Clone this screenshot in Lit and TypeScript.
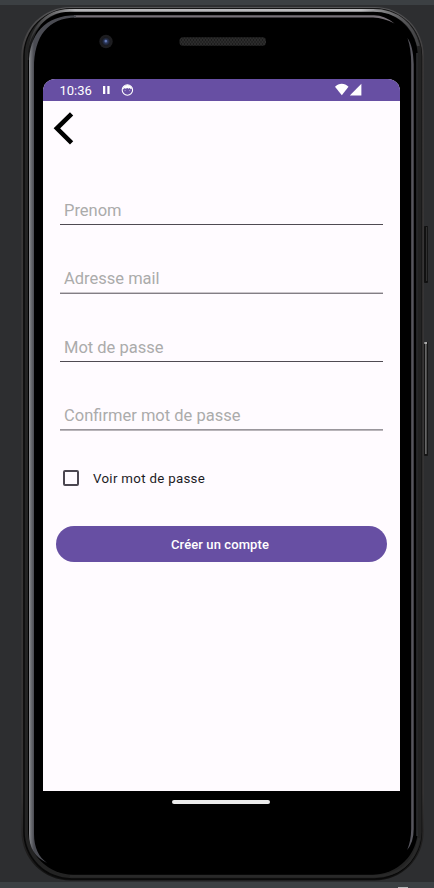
import { LitElement, html, css } from "lit";
import { customElement } from "lit/decorators.js";
import { classMap } from "lit/directives/class-map.js";

const FIELDS = [
  { label: "Prenom", rule: "crisp" },
  { label: "Adresse mail", rule: "low" },
  { label: "Mot de passe", rule: "crisp" },
  { label: "Confirmer mot de passe", rule: "high" },
];

@customElement("device-frame")
class DeviceFrame extends LitElement {
  static styles = css`
    :host { display: block; }
    svg { display: block; }
  `;
  render() {
    return html`<svg width="434" height="888" viewBox="0 0 434 888" aria-hidden="true">
      <defs>
        <linearGradient id="outer" gradientUnits="userSpaceOnUse" x1="0" y1="7" x2="0" y2="881">
          <stop offset="0" stop-color="#555557" /><stop offset="0.06" stop-color="#3c3a3a" />
          <stop offset="0.9" stop-color="#373535" /><stop offset="1" stop-color="#111" />
        </linearGradient>
        <linearGradient id="shine" gradientUnits="userSpaceOnUse" x1="28" y1="0" x2="420" y2="0">
          <stop offset="0" stop-color="#77777b" stop-opacity="0.15" /><stop offset="0.12" stop-color="#b4b4b7" />
          <stop offset="0.85" stop-color="#bcbcbf" /><stop offset="1" stop-color="#66666a" stop-opacity="0.4" />
        </linearGradient>
        <linearGradient id="left" gradientUnits="userSpaceOnUse" x1="29" y1="0" x2="34" y2="0">
          <stop offset="0" stop-color="#929397" /><stop offset="0.35" stop-color="#707277" />
          <stop offset="1" stop-color="#4a4b52" />
        </linearGradient>
        <radialGradient id="lens"><stop offset="0" stop-color="#53669b" /><stop offset="0.45" stop-color="#293454" /><stop offset="1" stop-color="#15161c" /></radialGradient>
        <pattern id="mesh" width="3" height="4" patternUnits="userSpaceOnUse">
          <rect width="3" height="4" fill="#1c1c1c" /><path d="M0 0l3 4M3 0l-3 4" stroke="#343434" stroke-width="0.7" />
        </pattern>
      </defs>
      <rect width="434" height="888" fill="#2d2e30" />
      <rect width="434" height="5" fill="#3c4043" />
      <rect y="882" width="434" height="6" fill="#3c4043" />
      <rect x="398" y="887" width="10" height="1" fill="#b5b7b8" />
      <rect x="424" y="226" width="4" height="57" rx="1" fill="#111" />
      <rect x="426" y="227" width="1.2" height="54" fill="#303030" />
      <rect x="424" y="342" width="4" height="114" rx="1" fill="#151515" />
      <rect x="425" y="343" width="1.7" height="111" fill="#656565" />
      <rect x="424.3" y="342" width="2.7" height="2" fill="#aaa" />
      <rect x="21.3" y="7" width="402.4" height="873.5" rx="49" fill="url(#outer)" />
      <rect x="23.2" y="8" width="399" height="871.7" rx="48" fill="#090909" />
      <rect x="24.7" y="8.5" width="397" height="869.7" rx="47" fill="#232323" />
      <rect x="28" y="11" width="389.7" height="863.7" rx="45" fill="#000" />
      <path d="M29 60C29 30 44 10.3 70 10.3H373C397 10.3 413 24 418.5 46" fill="none" stroke="url(#shine)" stroke-width="2.8" />
      <path d="M74 15.2H374Q385 15.4 394.5 23.5Q384 18 373 17.5H74Z" fill="#777178" />
      <path d="M29 834V64C29 34 45 15.2 76 15.2V17.5C48 18 34 36 34 68V834C34 848 39 857 47 863C35 857 29 848 29 834Z" fill="url(#left)" />
      <path d="M407.5 38C411.5 44 413.3 51 413.7 64V829Q413.7 842 407.2 850Q411 841 411.2 829V64Q411.2 49 407.5 38Z" fill="#57565e" />
      <path d="M417 53V836" stroke="#45464b" stroke-width="1" />
      <path d="M70 876.3H373C400 876.3 415 862 419 838" fill="none" stroke="#292929" stroke-width="2.5" />
      <circle cx="106" cy="41.5" r="6.7" fill="#1d1d20" />
      <circle cx="106" cy="41.5" r="4.3" fill="url(#lens)" />
      <circle cx="105.8" cy="41" r="1.2" fill="#6278b5" />
      <rect x="179.5" y="37.3" width="86.5" height="8.5" rx="3.5" fill="url(#mesh)" />
    </svg>`;
  }
}

@customElement("status-bar")
class StatusBar extends LitElement {
  static styles = css`
    :host { display: flex; height: 22px; box-sizing: border-box; align-items: center; padding: 0 38px 0 16.5px; background: #674fa3; color: #fff; font: 400 13px/22px Roboto, sans-serif; }
    .time { width: 42.5px; height: 22px; line-height: 23px; }
    .pause { margin-right: 10.5px; }
    .space { flex: 1; }
    svg { display: block; flex: none; }
  `;
  render() {
    return html`<span class="time">10:36</span>
      <svg class="pause" width="8" height="22" viewBox="0 0 8 22"><path d="M1 7h2.3v8H1zM5.3 7h2.3v8H5.3z" fill="#fff" /></svg>
      <svg width="13" height="22" viewBox="0 0 13 22">
        <circle cx="6.4" cy="11" r="5.2" fill="none" stroke="#fff" stroke-width="1.1" />
        <path d="M2 9.2C3.4 5 9.6 5 10.9 9.2L10 10.6L8.8 9.1L7.6 9.7L6.2 9.1L4.7 9.8L3.6 9.1L2.7 10.6Z" fill="#fff" />
        <path d="M3.6 11.6h1M8.2 11.6h1" stroke="#fff" stroke-opacity=".5" />
      </svg>
      <span class="space"></span>
      <svg width="27" height="22" viewBox="0 0 27 22" fill="#fff">
        <path d="M0 7.8C3.8 3.8 9.7 3.8 13.5 7.8L6.8 16.2Z" /><path d="M26.4 4.8V16.5H14.8Z" />
      </svg>`;
  }
}

@customElement("app-root")
class AppRoot extends LitElement {
  static styles = css`
    :host { display: block; width: 434px; height: 888px; font-family: Roboto, sans-serif; }
    .stage { display: grid; width: 434px; height: 888px; overflow: hidden; }
    .stage > * { grid-area: 1 / 1; }
    .front { display: flex; flex-direction: column; align-items: center; width: 357px; padding: 79px 0 0 43px; }
    .screen { width: 357px; height: 712px; border-radius: 12px 12px 0 0; overflow: hidden; background: #fffbff; display: flex; flex-direction: column; }
    .back { display: block; margin: 10px 0 0 9px; width: 24px; height: 36px; padding: 0; border: 0; background: none; }
    .back svg { display: block; }
    form { display: flex; flex-direction: column; padding: 0 13px; margin-top: 41px; }
    .field { box-sizing: border-box; margin: 0 4px; display: flex; flex-direction: column; justify-content: flex-end; height: 69px; }
    .field.first { height: 38px; }
    .field.low, .field.high { height: 68px; }
    .label { padding-left: 4px; font-size: 16.5px; line-height: 22px; color: #ababab; margin-bottom: 2px; }
    .rule { height: 2px; }
    .crisp .rule { background: linear-gradient(#4f4a52 50%, transparent 50%); }
    .low .rule { background: linear-gradient(#cbc6cb 50%, #837e85 50%); }
    .high .rule { background: linear-gradient(#9a969c 50%, #b9b5ba 50%); }
    .check { display: flex; align-items: center; height: 20px; margin: 37px 0 0 7px; color: #1c1b1f; font-size: 13.3px; letter-spacing: 0.3px; }
    .box { box-sizing: border-box; width: 16px; height: 16px; border: 2px solid #4b4650; border-radius: 2px; margin-right: 14px; }
    .submit { height: 36px; margin: 38px 0 0; padding: 1px 3px 0 0; border: 0; border-radius: 18px; background: #674fa3; color: #fff; font: 500 13px/36px Roboto, sans-serif; letter-spacing: 0.1px; }
    .home { width: 98px; height: 4px; margin: 9px 1px 0 0; border-radius: 2px; background: #ececec; }
  `;
  render() {
    return html`<div class="stage">
      <device-frame></device-frame>
      <div class="front">
        <main class="screen">
          <status-bar></status-bar>
          <button class="back" aria-label="Retour">
            <svg width="24" height="36" viewBox="0 0 24 36"><path d="M19.6 2.8L4.9 17.3L19.6 31.9" fill="none" stroke="#000" stroke-width="4.6" /></svg>
          </button>
          <form>
            ${FIELDS.map((f, i) => html`<div class=${classMap({ field: true, first: i === 0, [f.rule]: true })}>
              <span class="label">${f.label}</span><span class="rule"></span>
            </div>`)}
            <label class="check"><span class="box"></span>Voir mot de passe</label>
            <button class="submit" type="button">Créer un compte</button>
          </form>
        </main>
        <div class="home"></div>
      </div>
    </div>`;
  }
}
